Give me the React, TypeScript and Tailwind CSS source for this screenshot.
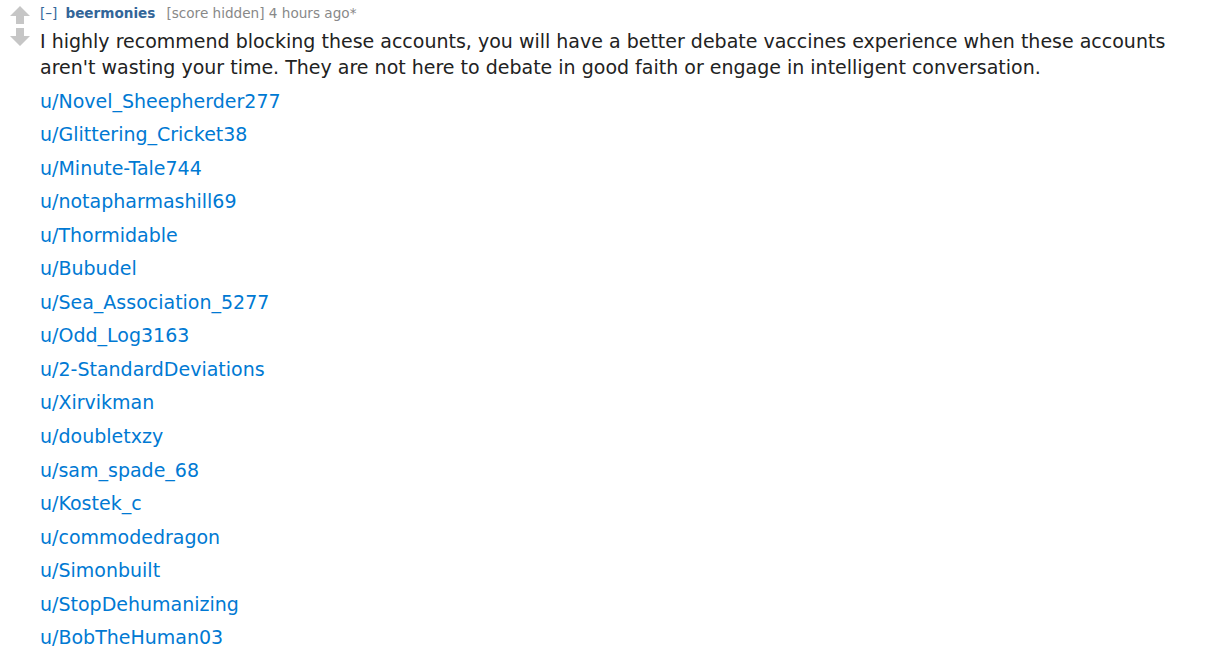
const users = [
  "Novel_Sheepherder277",
  "Glittering_Cricket38",
  "Minute-Tale744",
  "notapharmashill69",
  "Thormidable",
  "Bubudel",
  "Sea_Association_5277",
  "Odd_Log3163",
  "2-StandardDeviations",
  "Xirvikman",
  "doubletxzy",
  "sam_spade_68",
  "Kostek_c",
  "commodedragon",
  "Simonbuilt",
  "StopDehumanizing",
  "BobTheHuman03",
];

function Arrow({ down }: { down?: boolean }) {
  return (
    <svg width="20" height="18" viewBox="0 0 20 18" className={down ? "rotate-180" : ""}>
      <path d="M10 0 L20 10 L14 10 L14 18 L6 18 L6 10 L0 10 Z" fill="#c6c6c6" />
    </svg>
  );
}

export default function App() {
  return (
    <div className="w-[1206px] h-[660px] bg-white overflow-hidden font-['DejaVu_Sans',Verdana,sans-serif]">
      <div className="flex pt-[5px]">
        {/* vote arrows */}
        <div className="w-[40px] pl-[10px] flex flex-col gap-[4px] pt-[1px]">
          <Arrow />
          <Arrow down />
        </div>

        <div className="flex-1">
          <div className="text-[13.6px] leading-[17px] text-[#888] flex items-baseline">
            <span className="text-[#369]">[–]</span>
            <span className="ml-[8px] font-bold text-[#369]">beermonies</span>
            <span className="ml-[11px]">[score hidden] 4 hours ago*</span>
          </div>

          <div className="mt-[6px] text-[19px] leading-[26px] text-[#222] pr-[30px]">
            <p>
              I highly recommend blocking these accounts, you will have a better debate vaccines experience when these
              accounts aren't wasting your time. They are not here to debate in good faith or engage in intelligent
              conversation.
            </p>
            {users.map((u) => (
              <p key={u} className="mt-[7.56px]">
                <a className="text-[#0079d3]">u/{u}</a>
              </p>
            ))}
          </div>
        </div>
      </div>
    </div>
  );
}
